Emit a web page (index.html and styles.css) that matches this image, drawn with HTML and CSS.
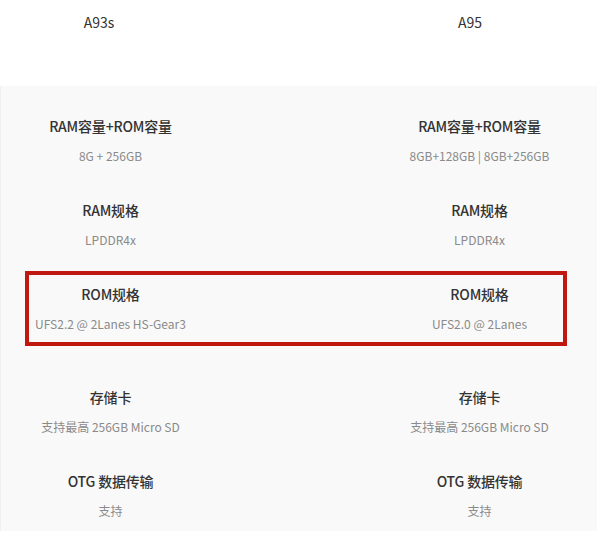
FILE: index.html
```html
<!DOCTYPE html>
<html lang="zh-CN">
<head>
  <meta charset="UTF-8" />
  <meta name="viewport" content="width=device-width, initial-scale=1.0" />
  <title>A93s vs A95</title>
  <link rel="stylesheet" href="styles.css">
</head>
<body>
  <div class="head">
    <div class="model">A93s</div>
    <div class="model">A95</div>
  </div>

  <div class="specs">
    <div class="row">
      <div class="cell">
        <div class="name">RAM容量+ROM容量</div>
        <div class="value">8G + 256GB</div>
      </div>
      <div class="cell">
        <div class="name">RAM容量+ROM容量</div>
        <div class="value">8GB+128GB | 8GB+256GB</div>
      </div>
    </div>

    <div class="row">
      <div class="cell">
        <div class="name">RAM规格</div>
        <div class="value">LPDDR4x</div>
      </div>
      <div class="cell">
        <div class="name">RAM规格</div>
        <div class="value">LPDDR4x</div>
      </div>
    </div>

    <!-- highlighted row -->
    <div class="row marked">
      <div class="cell">
        <div class="name">ROM规格</div>
        <div class="value">UFS2.2 @ 2Lanes HS-Gear3</div>
      </div>
      <div class="cell">
        <div class="name">ROM规格</div>
        <div class="value">UFS2.0 @ 2Lanes</div>
      </div>
    </div>

    <div class="row spaced">
      <div class="cell">
        <div class="name">存储卡</div>
        <div class="value">支持最高 256GB Micro SD</div>
      </div>
      <div class="cell">
        <div class="name">存储卡</div>
        <div class="value">支持最高 256GB Micro SD</div>
      </div>
    </div>

    <div class="row">
      <div class="cell">
        <div class="name">OTG 数据传输</div>
        <div class="value">支持</div>
      </div>
      <div class="cell">
        <div class="name">OTG 数据传输</div>
        <div class="value">支持</div>
      </div>
    </div>
  </div>
</body>
</html>
```

FILE: styles.css
```css
body {
  margin: 0;
  background-color: #ffffff;
  font-family: "Noto Sans CJK SC", "Noto Sans", sans-serif;
}

.head {
  height: 86px;
  box-sizing: border-box;
  padding-top: 12px;
  display: grid;
  grid-template-columns: 198px 198px;
  column-gap: 173px;
}

.model {
  text-align: center;
  font-size: 14px;
  line-height: 20px;
  color: #333333;
}

.specs {
  width: 597px;
  box-sizing: border-box;
  background-color: #f9f9f9;
  border-left: 1px solid #f0f0f0;
  padding-bottom: 6px;
}

.row {
  position: relative;
  height: 84px;
  box-sizing: border-box;
  padding: 30px 7px 0 0;
  display: grid;
  grid-template-columns: 220px 220px;
  justify-content: space-between;
}

.row.spaced {
  margin-top: 19px;
}

.cell {
  text-align: center;
  margin-left: -1px;
}

.name {
  font-size: 14px;
  line-height: 20px;
  font-weight: 500;
  letter-spacing: -0.2px;
  color: #333333;
}

.value {
  margin-top: 11px;
  font-size: 12px;
  line-height: 18px;
  color: #8a8a8a;
}

.row.marked::after {
  content: "";
  position: absolute;
  top: 17px;
  left: 24px;
  right: 30px;
  bottom: -8px;
  border: 4px solid #c0170f;
}
```
